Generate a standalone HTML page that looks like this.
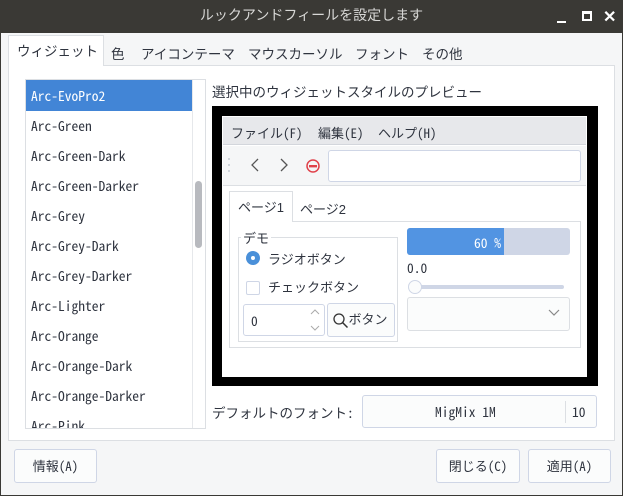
<!DOCTYPE html>
<html><head><meta charset="utf-8"><style>
*{box-sizing:border-box;margin:0;padding:0}
body{width:623px;height:496px;overflow:hidden;background:#3a3935;font-family:"Liberation Sans","Noto Sans CJK JP",sans-serif;font-size:13.5px;color:#2f343f;position:relative}
.a{position:absolute}
.mono{font-family:"Noto Sans Mono CJK JP","Liberation Mono",monospace;font-size:13.5px}
#win{left:1px;top:33px;width:621px;height:462px;background:#f5f6f7}
.btn{position:absolute;border:1px solid #cfd6e6;border-radius:3px;background:#fbfcfc;text-align:center;line-height:31px}
.li{position:absolute;left:31px;height:30px;line-height:30px;white-space:nowrap}
.m{font-family:"Noto Sans Mono CJK JP","Liberation Mono",monospace}
</style></head><body>
<div class="a" style="left:0;top:0;width:623px;height:33px;background:#3a3935;color:#d8d8d6;text-align:center;line-height:30px;font-size:14px">ルックアンドフィールを設定します</div>
<div class="a" style="left:557px;top:21px;width:9px;height:2px;background:#fff"></div>
<div class="a" style="left:582px;top:11px;width:10px;height:10px;border:2px solid #fff;border-top-width:3px"></div>
<div class="a" style="left:603px;top:7px;color:#fff;font-size:16px;font-weight:bold">✕</div>
<div id="win" class="a"></div>
<div class="a" style="left:8px;top:65px;width:607px;height:376px;border:1px solid #dcdfe3;background:#fff"></div>
<div class="a" style="left:8px;top:35px;width:96px;height:31px;border:1px solid #dcdfe3;border-bottom:none;background:#fff;line-height:31px;padding-left:8px">ウィジェット</div>
<div class="a" style="left:111px;top:43px">色</div>
<div class="a" style="left:141px;top:43px">アイコンテーマ</div>
<div class="a" style="left:248px;top:43px">マウスカーソル</div>
<div class="a" style="left:355px;top:43px">フォント</div>
<div class="a" style="left:422px;top:43px">その他</div>
<div class="a" style="left:25px;top:79px;width:181px;height:350px;border:1px solid #dcdfe3;background:#fff;overflow:hidden">
<div class="a" style="left:0;top:0;width:166px;height:31px;background:#4285d6"></div>
<div class="a" style="left:166px;top:0;width:1px;height:350px;background:#e6e8eb"></div>
<div class="a" style="left:169px;top:101px;width:7px;height:67px;border-radius:4px;background:#b8babf"></div>
</div>
<div class="mono">
<div class="li" style="top:80px;color:#fff">Arc-EvoPro2</div>
<div class="li" style="top:110px">Arc-Green</div>
<div class="li" style="top:140px">Arc-Green-Dark</div>
<div class="li" style="top:170px">Arc-Green-Darker</div>
<div class="li" style="top:200px">Arc-Grey</div>
<div class="li" style="top:230px">Arc-Grey-Dark</div>
<div class="li" style="top:260px">Arc-Grey-Darker</div>
<div class="li" style="top:290px">Arc-Lighter</div>
<div class="li" style="top:320px">Arc-Orange</div>
<div class="li" style="top:350px">Arc-Orange-Dark</div>
<div class="li" style="top:380px">Arc-Orange-Darker</div>
<div class="li" style="top:410px;height:18px;overflow:hidden">Arc-Pink</div>
</div>
<div class="a" style="left:212px;top:81px">選択中のウィジェットスタイルのプレビュー</div>
<div class="a" style="left:212px;top:106px;width:386px;height:280px;background:#000"></div>
<div class="a" style="left:222px;top:116px;width:365px;height:261px;background:#fff"></div>
<div class="a" style="left:223px;top:117px;width:363px;height:28px;background:#e7e8eb;border-bottom:1px solid #d3d6dc"></div>
<div class="a" style="left:231px;top:123px;font-size:13px">ファイル<span class="m">(F)</span></div>
<div class="a" style="left:318px;top:123px;font-size:13px">編集<span class="m">(E)</span></div>
<div class="a" style="left:378px;top:123px;font-size:13px">ヘルプ<span class="m">(H)</span></div>
<div class="a" style="left:223px;top:146px;width:363px;height:40px;background:#f5f6f7;border-bottom:1px solid #dcdfe3"></div>
<svg class="a" style="left:225px;top:150px" width="120" height="35">
<g fill="#c5cad3"><circle cx="4" cy="9" r="1"/><circle cx="4" cy="15" r="1"/><circle cx="4" cy="21" r="1"/></g>
<path d="M33 9l-6 6 6 6M56 9l6 6-6 6" stroke="#555" stroke-width="1.3" fill="none"/>
<circle cx="88" cy="16" r="6" stroke="#e0424b" stroke-width="1.5" fill="none"/><rect x="84" y="15" width="8" height="2.4" fill="#e0424b"/>
</svg>
<div class="a" style="left:328px;top:150px;width:253px;height:32px;border:1px solid #cfd6e6;border-radius:3px;background:#fff"></div>
<div class="a" style="left:229px;top:221px;width:352px;height:127px;border:1px solid #dcdfe3"></div>
<div class="a" style="left:229px;top:191px;width:64px;height:31px;border:1px solid #dcdfe3;border-bottom:none;background:#fff;line-height:32px;padding-left:8px;font-size:13px">ページ1</div>
<div class="a" style="left:300px;top:199px;font-size:13px">ページ2</div>
<div class="a" style="left:238px;top:237px;width:160px;height:105px;border:1px solid #dcdfe3"></div>
<div class="a" style="left:241px;top:228px;background:#fff;padding:0 2px;font-size:13px">デモ</div>
<div class="a" style="left:246px;top:251px;width:14px;height:14px;border-radius:50%;background:#4a90d9"></div>
<div class="a" style="left:251px;top:256px;width:4px;height:4px;border-radius:50%;background:#fff"></div>
<div class="a" style="left:268px;top:249px;font-size:13px">ラジオボタン</div>
<div class="a" style="left:246px;top:281px;width:14px;height:14px;border:1px solid #cfd6e6;border-radius:2px;background:#fff"></div>
<div class="a" style="left:268px;top:277px;font-size:13px">チェックボタン</div>
<div class="a" style="left:243px;top:304px;width:82px;height:32px;border:1px solid #cfd6e6;border-radius:3px;background:#fff"></div>
<div class="a mono" style="left:251px;top:310px">0</div>
<svg class="a" style="left:308px;top:306px" width="14" height="28"><path d="M3 8l4-4 4 4M3 20l4 4 4-4" stroke="#aaa" fill="none"/></svg>
<div class="btn" style="left:327px;top:303px;width:68px;height:34px;font-size:13px;line-height:32px;padding-left:14px">ボタン</div>
<svg class="a" style="left:332px;top:312px" width="18" height="18"><circle cx="7" cy="7" r="5" stroke="#333" stroke-width="1.3" fill="none"/><path d="M10.5 10.5l5 5" stroke="#333" stroke-width="1.5"/></svg>
<div class="a" style="left:407px;top:228px;width:163px;height:27px;border-radius:3px;background:#cfd6e6"></div>
<div class="a" style="left:407px;top:228px;width:97px;height:27px;border-radius:3px 0 0 3px;background:#5294e2"></div>
<div class="a mono" style="left:474px;top:232px;color:#fff">60 %</div>
<div class="a mono" style="left:407px;top:257px">0.0</div>
<div class="a" style="left:410px;top:285px;width:154px;height:4px;border-radius:2px;background:#cfd6e6"></div>
<div class="a" style="left:408px;top:280px;width:14px;height:14px;border-radius:50%;background:#fbfcfc;border:1px solid #cfd6e6"></div>
<div class="a" style="left:407px;top:297px;width:163px;height:34px;border:1px solid #dcdfe3;border-radius:3px;background:#fbfcfc"></div>
<svg class="a" style="left:548px;top:308px" width="12" height="10"><path d="M1 2l5 5 5-5" stroke="#888" fill="none" stroke-width="1.2"/></svg>
<div class="a" style="left:212px;top:402px">デフォルトのフォント<span class="m">:</span></div>
<div class="btn" style="left:362px;top:395px;width:235px;height:33px"></div>
<div class="a mono" style="left:435px;top:401px">MigMix 1M</div>
<div class="a" style="left:565px;top:401px;width:1px;height:22px;background:#dcdfe3"></div>
<div class="a mono" style="left:572px;top:401px">10</div>
<div class="btn" style="left:14px;top:449px;width:83px;height:34px;font-size:13px">情報<span class="m">(A)</span></div>
<div class="btn" style="left:436px;top:449px;width:84px;height:34px;font-size:13px">閉じる<span class="m">(C)</span></div>
<div class="btn" style="left:528px;top:449px;width:83px;height:34px;font-size:13px">適用<span class="m">(A)</span></div>
</body></html>
